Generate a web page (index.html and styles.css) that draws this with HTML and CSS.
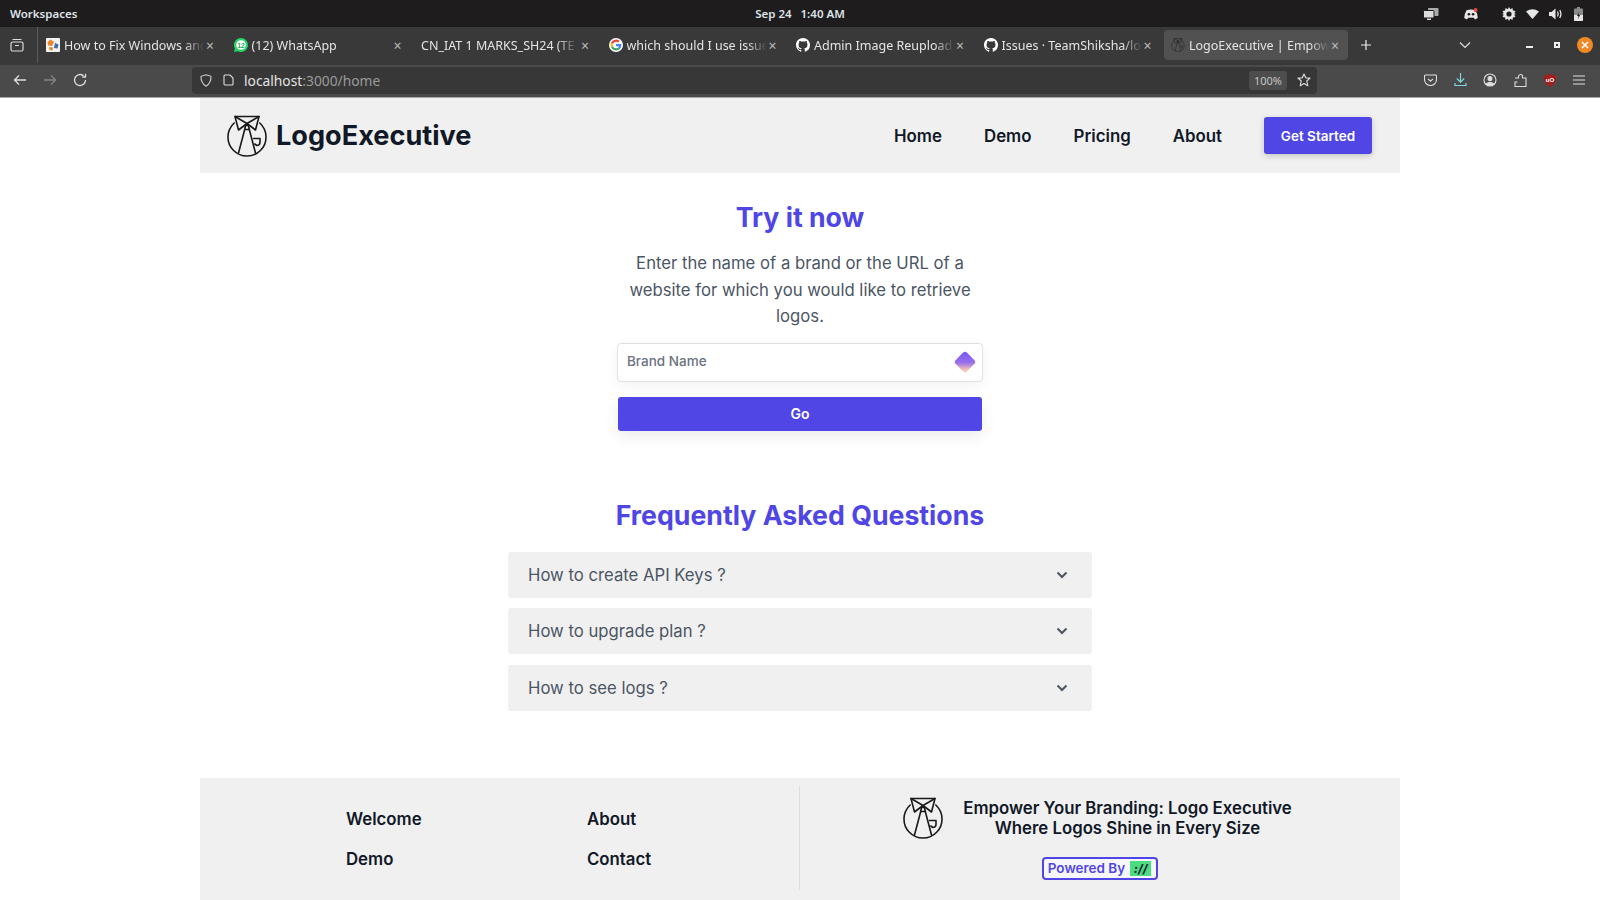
FILE: index.html
```html
<!DOCTYPE html>
<html lang="en">
<head>
<meta charset="utf-8">
<title>LogoExecutive</title>
<link rel="stylesheet" href="styles.css">
</head>
<body>
<svg class="defs" width="0" height="0" aria-hidden="true">
  <symbol id="logo" viewBox="0 0 40 42">
    <g fill="none" stroke="currentColor" stroke-width="1.600" stroke-linejoin="round" stroke-linecap="round">
      <path d="M7.200 8A19 19 0 1 0 32.800 8"/>
      <path d="M8 1.500H32L28.500 15L20 8.500L11.500 15Z"/>
      <path d="M8 1.500L20 8.500L32 1.500"/>
      <path d="M18.500 10.500L21.500 10.500L22.300 14.500H17.700Z"/>
      <path d="M17.700 14.500L11.500 38M22.300 14.500L28.500 38"/>
      <path d="M26.500 23.500H33V27.500A3.200 3.200 0 0 1 29.800 30.500L27.800 29"/>
    </g>
  </symbol>
  <symbol id="github" viewBox="0 0 16 16">
    <path fill="#fff" d="M8 0C3.58 0 0 3.58 0 8c0 3.54 2.29 6.53 5.47 7.59.4.07.55-.17.55-.38 0-.19-.01-.82-.01-1.49-2.01.37-2.53-.49-2.69-.94-.09-.23-.48-.94-.82-1.13-.28-.15-.68-.52-.01-.53.63-.01 1.08.58 1.23.82.72 1.21 1.87.87 2.33.66.07-.52.28-.87.51-1.07-1.78-.2-3.64-.89-3.64-3.95 0-.87.31-1.59.82-2.15-.08-.2-.36-1.02.08-2.12 0 0 .67-.21 2.2.82.64-.18 1.32-.27 2-.27s1.36.09 2 .27c1.53-1.04 2.2-.82 2.2-.82.44 1.1.16 1.92.08 2.12.51.56.82 1.27.82 2.15 0 3.07-1.87 3.75-3.65 3.95.29.25.54.73.54 1.48 0 1.07-.01 1.93-.01 2.2 0 .21.15.46.55.38A8.01 8.01 0 0 0 16 8c0-4.42-3.58-8-8-8z"/>
  </symbol>
</svg>

<div class="topbar">
  <span class="workspaces">Workspaces</span>
  <span class="clock"><span>Sep 24</span><span>1:40 AM</span></span>
  <div class="tray">
    <svg class="tray-a" width="16" height="14" viewBox="0 0 16 14"><rect x="5" y="1" width="10.500" height="8" rx="1" fill="#aaa"/><rect x="0.500" y="3.500" width="10.500" height="7.500" rx="1" fill="#ddd" stroke="#1e1c1d"/><rect x="4" y="11.500" width="4" height="1.500" fill="#ddd"/></svg>
    <svg class="tray-b" width="14" height="12" viewBox="0 0 14 12"><path fill="#e6e6e6" d="M2.500 2.200Q7 .6 11.500 2.200Q13.500 5.500 13.800 10L11 11.500L9.800 9.800H4.200L3 11.500L.2 10Q.5 5.500 2.500 2.200Z"/><circle cx="4.900" cy="6.300" r="1.300" fill="#1e1c1d"/><circle cx="9.100" cy="6.300" r="1.300" fill="#1e1c1d"/><circle cx="11.600" cy="2" r="2" fill="#e8453c"/></svg>
    <svg class="tray-c" width="14" height="14" viewBox="0 0 14 14"><path fill="#e6e6e6" d="M7 0l1.300 2.200L10.500 1l.4 2.600 2.600.4-1.200 2.200L14 7l-1.700.8 1.200 2.200-2.600.4-.4 2.600-2.200-1.200L7 14l-1.300-2.200L3.500 13l-.4-2.600-2.600-.4 1.200-2.200L0 7l1.700-.8L.5 4l2.600-.4L3.500 1l2.200 1.200z"/><circle cx="7" cy="7" r="2.600" fill="#1e1c1d"/></svg>
    <svg class="tray-d" width="13" height="10" viewBox="0 0 13 10"><path fill="#e6e6e6" d="M0 2.500Q6.500-2 13 2.500L6.500 10Z"/></svg>
    <svg class="tray-e" width="14" height="12" viewBox="0 0 14 12"><path fill="#e6e6e6" d="M0 4H2.500L6.500 .5V11.500L2.500 8H0Z"/><path fill="none" stroke="#e6e6e6" stroke-width="1.300" d="M8.500 3.500Q10 6 8.500 8.500M10.800 2Q13 6 10.800 10"/></svg>
    <svg class="tray-f" width="9" height="14" viewBox="0 0 9 14"><rect x="3" y="0" width="3" height="2" fill="#888"/><rect x="0" y="1.500" width="9" height="12.500" rx="1" fill="#8a8a8a"/><path fill="#e6e6e6" d="M0 8H9V13A1 1 0 0 1 8 14H1A1 1 0 0 1 0 13Z"/><path fill="#1e1c1d" d="M5 5L3 9H4.500L4 12L6.200 8H4.800Z"/></svg>
  </div>
</div>

<div class="tabbar">
  <div class="tabview">
    <svg width="14" height="14" viewBox="0 0 14 14" fill="none" stroke="#ddd" stroke-width="1.200"><rect x="1" y="4" width="12" height="9" rx="1.500"/><path d="M2.500 1.500H11.500M5 7.500H9"/></svg>
  </div>
  <div class="tabs">
    <div class="tab">
      <svg class="fav" width="14" height="14" viewBox="0 0 14 14"><rect width="14" height="14" rx="1" fill="#f3f3f3"/><path fill="#e8872c" d="M4.500 1.500L8 4 6 8 2 7.500 1.500 4Z"/><path fill="#3c6ea8" d="M9 5L12.500 6.500 11.500 10.500 8 10Z"/><path fill="#e8872c" d="M3 9L7 9.500 6.500 12.500 3.500 12Z"/></svg>
      <span class="title">How to Fix Windows and</span><span class="close">×</span>
    </div>
    <div class="tab">
      <svg class="fav" width="14" height="14" viewBox="0 0 14 14"><path fill="#25d366" d="M7 0a7 7 0 0 1 0 14 7 7 0 0 1-3.300-.8L0 14l.9-3.500A7 7 0 0 1 7 0Z"/><circle cx="7" cy="7" r="4.800" fill="#fff"/><text class="fav-num" x="7" y="9.500" text-anchor="middle">12</text></svg>
      <span class="title">(12) WhatsApp</span><span class="close">×</span>
    </div>
    <div class="tab tab-nofav">
      <span class="title">CN_IAT 1 MARKS_SH24 (TE 2024)</span><span class="close">×</span>
    </div>
    <div class="tab">
      <svg class="fav" width="14" height="14" viewBox="0 0 16 16"><circle cx="8" cy="8" r="8" fill="#fff"/><path fill="#4285f4" d="M14 8.200c0-.5 0-.9-.1-1.300H8v2.500h3.400c-.2.800-.6 1.500-1.300 1.900l2 1.600c1.200-1.100 1.900-2.700 1.900-4.700z"/><path fill="#34a853" d="M8 14.200c1.700 0 3.100-.6 4.100-1.500l-2-1.600c-.6.400-1.300.6-2.100.6-1.600 0-3-1.100-3.500-2.600l-2.100 1.600c1 2 3.200 3.500 5.600 3.500z"/><path fill="#fbbc05" d="M4.500 9.100a3.700 3.700 0 0 1 0-2.300L2.400 5.200a6.200 6.200 0 0 0 0 5.500z"/><path fill="#ea4335" d="M8 4.300c.9 0 1.700.3 2.300.9L12.100 3.400A6.200 6.200 0 0 0 2.400 5.200l2.100 1.600C5 5.400 6.400 4.300 8 4.300z"/></svg>
      <span class="title">which should I use issues</span><span class="close">×</span>
    </div>
    <div class="tab">
      <svg class="fav" width="14" height="14"><use href="#github"/></svg>
      <span class="title">Admin Image Reupload by</span><span class="close">×</span>
    </div>
    <div class="tab">
      <svg class="fav" width="14" height="14"><use href="#github"/></svg>
      <span class="title">Issues · TeamShiksha/logo</span><span class="close">×</span>
    </div>
    <div class="tab tab-active">
      <svg class="fav fav-logo" width="14" height="14"><use href="#logo"/></svg>
      <span class="title">LogoExecutive | Empower Your</span><span class="close">×</span>
    </div>
    <svg class="newtab" width="12" height="12" viewBox="0 0 12 12"><path stroke="#eee" stroke-width="1.200" d="M6 1V11M1 6H11"/></svg>
  </div>
  <svg class="tablist" width="12" height="8" viewBox="0 0 12 8" fill="none" stroke="#ddd" stroke-width="1.200"><path d="M1 1.500L6 6.500L11 1.500"/></svg>
  <div class="winctl">
    <span class="minimize"></span>
    <span class="maximize"></span>
    <span class="closewin"><svg width="8" height="8" viewBox="0 0 8 8"><path stroke="#fff" stroke-width="1.600" d="M1 1L7 7M7 1L1 7"/></svg></span>
  </div>
</div>

<div class="navbar">
  <div class="navbtns">
    <svg width="14" height="12" viewBox="0 0 14 12" fill="none" stroke="#ddd" stroke-width="1.300"><path d="M13 6H1.500M6 1.500L1.500 6L6 10.500"/></svg>
    <svg width="14" height="12" viewBox="0 0 14 12" fill="none" stroke="#848484" stroke-width="1.300"><path d="M1 6H12.500M8 1.500L12.500 6L8 10.500"/></svg>
    <svg width="14" height="14" viewBox="0 0 14 14" fill="none" stroke="#ddd" stroke-width="1.300"><path d="M12.500 7A5.500 5.500 0 1 1 10.500 2.800M12.500 .8V4H9.300"/></svg>
  </div>
  <div class="urlbar">
    <svg class="shield" width="12" height="13" viewBox="0 0 12 13" fill="none" stroke="#ccc" stroke-width="1.100"><path d="M6 .8L11 2.300Q11.200 9 6 12.200Q.8 9 1 2.300Z"/></svg>
    <svg class="page" width="11" height="12" viewBox="0 0 11 12" fill="none" stroke="#ddd" stroke-width="1.100"><path d="M1 2A1 1 0 0 1 2 1H7L10 4V10A1 1 0 0 1 9 11H2A1 1 0 0 1 1 10Z"/></svg>
    <span class="url"><span class="host">localhost</span>:3000/home</span>
    <span class="zoom">100%</span>
    <svg class="star" width="14" height="14" viewBox="0 0 14 14" fill="none" stroke="#ddd" stroke-width="1.100" stroke-linejoin="round"><path d="M7 1L8.800 5H13L9.800 8L10.800 12.800L7 10.500L3.200 12.800L4.200 8L1 5H5.200Z"/></svg>
  </div>
  <div class="toolbar">
    <svg width="13" height="12" viewBox="0 0 13 12" fill="none" stroke="#ddd" stroke-width="1.100"><path d="M1.500 1H11.500A1 1 0 0 1 12.500 2V5.500A6 6 0 0 1 .5 5.500V2A1 1 0 0 1 1.500 1Z"/><path d="M4 4.800L6.500 7.200L9 4.800"/></svg>
    <svg width="13" height="14" viewBox="0 0 13 14" fill="none" stroke="#7fd6dc" stroke-width="1.200"><path d="M6.500 0V9M2.800 5.500L6.500 9.200L10.200 5.500M1 10V12.500H12V10"/></svg>
    <svg width="14" height="14" viewBox="0 0 14 14" fill="none" stroke="#ddd" stroke-width="1.100"><circle cx="7" cy="7" r="6"/><circle cx="7" cy="5.500" r="2" fill="#ddd"/><path fill="#ddd" d="M3.200 11Q7 7.800 10.800 11Q7 13.800 3.200 11Z"/></svg>
    <svg width="14" height="15" viewBox="0 0 14 15" fill="none" stroke="#ddd" stroke-width="1.100"><path d="M1 5H4.500V4A2.200 2.200 0 0 1 8.500 2.500V5H12V13.500H1V9H3.500"/></svg>
    <svg width="12" height="13" viewBox="0 0 12 13"><path fill="#a51d1d" d="M6 0L12 1.800Q12.300 9.500 6 13Q-.3 9.500 0 1.800Z"/><text class="ublock" x="6" y="7.800" text-anchor="middle">uO</text></svg>
    <svg width="12" height="10" viewBox="0 0 12 10" stroke="#ddd" stroke-width="1.200"><path d="M0 1H12M0 5H12M0 9H12"/></svg>
  </div>
</div>

<div class="page-wrap">
  <header class="site-header">
    <a class="brand">
      <svg class="brand-logo"><use href="#logo"/></svg>
      <span class="brand-name">LogoExecutive</span>
    </a>
    <nav class="site-nav">
      <a>Home</a><a>Demo</a><a>Pricing</a><a>About</a>
      <button class="cta">Get Started</button>
    </nav>
  </header>

  <main>
    <section class="try">
      <h1 class="heading">Try it now</h1>
      <p class="lead">Enter the name of a brand or the URL of a website for which you would like to retrieve logos.</p>
      <div class="field">
        <span class="placeholder">Brand Name</span>
        <svg class="diamond" width="24" height="24" viewBox="0 0 24 24">
          <defs><linearGradient id="dg" x1="0.500" y1="0" x2="0.500" y2="1" gradientTransform="rotate(-45 .5 .5)"><stop offset="0" stop-color="#7a5cf5"/><stop offset="0.550" stop-color="#9a6fe8"/><stop offset="1" stop-color="#f6c7b4"/></linearGradient></defs>
          <rect x="4" y="4" width="16" height="16" rx="3" fill="url(#dg)" transform="rotate(45 12 12)"/>
        </svg>
      </div>
      <button class="go">Go</button>
    </section>

    <section class="faq">
      <h2 class="heading">Frequently Asked Questions</h2>
      <div class="faq-list">
        <div class="faq-item"><span>How to create API Keys ?</span><svg width="12" height="8" viewBox="0 0 12 8" fill="none" stroke="#4b5563" stroke-width="2"><path d="M1.500 1.500L6 6L10.500 1.500"/></svg></div>
        <div class="faq-item"><span>How to upgrade plan ?</span><svg width="12" height="8" viewBox="0 0 12 8" fill="none" stroke="#4b5563" stroke-width="2"><path d="M1.500 1.500L6 6L10.500 1.500"/></svg></div>
        <div class="faq-item"><span>How to see logs ?</span><svg width="12" height="8" viewBox="0 0 12 8" fill="none" stroke="#4b5563" stroke-width="2"><path d="M1.500 1.500L6 6L10.500 1.500"/></svg></div>
      </div>
    </section>
  </main>

  <footer class="site-footer">
    <div class="foot-links">
      <a>Welcome</a><a>About</a><a>Demo</a><a>Contact</a>
    </div>
    <div class="foot-brand">
      <div class="foot-tag">
        <svg class="foot-logo"><use href="#logo"/></svg>
        <p>Empower Your Branding: Logo Executive<br>Where Logos Shine in Every Size</p>
      </div>
      <div class="powered">Powered By <span class="mark">://</span></div>
    </div>
  </footer>
</div>
</body>
</html>
```
FILE: styles.css
```css
* { box-sizing: border-box; }
html, body { margin: 0; height: 900px; overflow: hidden; background: #fff; }
body { font-family: Inter, "Liberation Sans", sans-serif; font-optical-sizing: none; }
.defs { position: absolute; }
a { color: inherit; text-decoration: none; }

.topbar {
  height: 27px; background: #1e1c1d; color: #dfe3e8; display: grid;
  grid-template-columns: 1fr auto 1fr; align-items: center;
  font: 600 11.500px "Noto Sans", sans-serif; padding: 0 10px;
}
.clock { display: flex; gap: 9px; }
.tray { display: flex; align-items: center; justify-content: flex-end; padding-right: 7px; }
.tray-a { margin-right: 25px; }
.tray-b { margin-right: 24px; }
.tray-c { margin-right: 10px; }
.tray-d { margin-right: 10px; }
.tray-e { margin-right: 11px; }

.tabbar { height: 38px; background: #393939; display: flex; align-items: center; color: #eee; padding-bottom: 2px; }
.tabview { width: 38px; height: 36px; padding-left: 10px; border-right: 1px solid #5a5a5a; display: flex; align-items: center; }
.tabs { display: flex; align-items: center; gap: 3.500px; margin-left: 1px; }
.tab {
  width: 184px; height: 30px; display: flex; align-items: center; padding: 0 7px;
  border-radius: 4px; font: 400 12.500px "Noto Sans", sans-serif; color: #e4e4e4;
}
.tab-active { background: #515151; }
.fav { flex: none; margin-right: 4px; }
.fav-num { font: 700 6.500px "Liberation Sans", sans-serif; fill: #25a35a; }
.fav-logo { color: #222; }
.title {
  flex: 1; min-width: 0; white-space: nowrap; overflow: hidden;
  -webkit-mask-image: linear-gradient(90deg, #000 86%, transparent 100%);
  mask-image: linear-gradient(90deg, #000 86%, transparent 100%);
}
.close { flex: none; width: 12px; text-align: center; font-size: 14px; color: #bbb; }
.newtab { margin-left: 8px; flex: none; }
.tablist { margin-left: 87px; flex: none; }
.winctl { display: flex; align-items: center; margin-left: auto; padding-right: 7px; }
.minimize { width: 7px; height: 2px; background: #eee; margin: 3px 0 0; }
.maximize { width: 6px; height: 6px; border: 2px solid #eee; margin-left: 21px; }
.closewin { width: 16px; height: 16px; border-radius: 50%; background: #f08a24; margin-left: 17px; display: flex; align-items: center; justify-content: center; }

.navbar { height: 33px; background: #4a4a4a; display: flex; align-items: center; border-bottom: 1px solid #a8a8a8; padding-bottom: 2px; }
.navbtns { display: flex; align-items: center; gap: 16px; width: 192px; padding-left: 13px; }
.urlbar {
  width: 1125px; height: 27px; background: #373737; border-radius: 4px; display: flex; align-items: center;
  padding: 0 6px 0 8px; font: 400 13.800px "Noto Sans", sans-serif; color: #9a9a9a;
}
.page { margin-left: 11px; }
.url { margin-left: 10px; flex: 1; }
.host { color: #e4e4e4; }
.zoom { background: #4d4d4d; color: #c4c4c4; border-radius: 3px; font-size: 11px; height: 19px; line-height: 19px; width: 38px; text-align: center; margin-right: 10px; }
.toolbar { display: flex; align-items: center; gap: 16.500px; padding-left: 107px; }
.ublock { font: 700 6px "Liberation Sans", sans-serif; fill: #fff; }

.page-wrap { width: 1200px; margin: 0 auto; }
.site-header {
  height: 75px; background: #f0f0f0; display: flex; align-items: center; justify-content: space-between;
  padding: 0 28px 0 27px; color: #111827;
}
.brand { display: flex; align-items: center; gap: 9px; }
.brand-logo { width: 40px; height: 42px; color: #1a1a1a; }
.brand-name { font-size: 27.100px; font-weight: 700; line-height: 1; }
.site-nav { display: flex; align-items: center; gap: 42px; font-size: 16.850px; font-weight: 600; }
.cta {
  background: #4f46e5; color: #fff; border: 0; border-radius: 3px; height: 37px; width: 108px;
  font: 600 13.500px Inter, sans-serif; font-optical-sizing: none; box-shadow: 0 2px 6px rgba(0,0,0,.18);
}

.heading { margin: 0; color: #4f46e5; font-weight: 700; font-size: 26.700px; line-height: 36px; text-align: center; }
.try { display: flex; flex-direction: column; align-items: center; padding-top: 26px; }
.lead { margin: 15px 0 0; width: 366px; text-align: center; font-size: 16.700px; line-height: 26.500px; color: #4b5563; }
.field {
  width: 366px; height: 39px; margin-top: 13px; background: #fff; border: 1px solid #dfe1e7; border-radius: 4px;
  display: flex; align-items: center; justify-content: space-between; padding: 0 5px 0 9px;
  box-shadow: 0 4px 14px rgba(0,0,0,.05);
}
.placeholder { font-size: 13.500px; font-weight: 500; color: #6b7280; position: relative; top: -1px; }
.go {
  width: 364px; height: 34px; margin-top: 15px; background: #4f46e5; color: #fff; border: 0; border-radius: 3px;
  font: 600 14px Inter, sans-serif; font-optical-sizing: none; box-shadow: 0 6px 16px rgba(0,0,0,.08);
}

.faq { padding-top: 66px; }
.faq-list { width: 584px; margin: 19px auto 0; display: flex; flex-direction: column; gap: 10.500px; }
.faq-item {
  height: 46px; background: #f0f0f0; border-radius: 3px; display: flex; align-items: center; justify-content: space-between;
  padding: 0 24px 0 20px; font-size: 16.700px; color: #4b5563;
}

.site-footer { margin-top: 67px; height: 200px; background: #f0f0f0; display: grid; grid-template-columns: 600px 600px; padding-top: 8px; color: #111827; }
.foot-links {
  height: 104px; border-right: 1px solid #dedede; display: grid; grid-template-columns: 241px 1fr;
  grid-auto-rows: 40px; align-content: start; padding: 13px 0 0 146px; font-size: 16.800px; font-weight: 600; line-height: 40px;
}
.foot-brand { display: flex; flex-direction: column; align-items: center; }
.foot-tag { display: flex; align-items: center; gap: 20px; padding: 11px 5px 0 0; }
.foot-logo { width: 40px; height: 42px; color: #1a1a1a; }
.foot-tag p { margin: 0; font-size: 16.800px; font-weight: 600; line-height: 20px; text-align: center; }
.powered {
  margin-top: 18px; height: 23px; padding: 0 5px 0 4px; border: 2px solid #4f46e5; border-radius: 4px; display: flex; align-items: center;
  gap: 5px; color: #4f46e5; font-size: 13.500px; font-weight: 600; background: #f7f7fb;
}
.mark { background: #4ade80; color: #1f2937; font-size: 12px; font-weight: 800; font-style: italic; width: 21px; height: 15px; line-height: 15px; text-align: center; }
```
